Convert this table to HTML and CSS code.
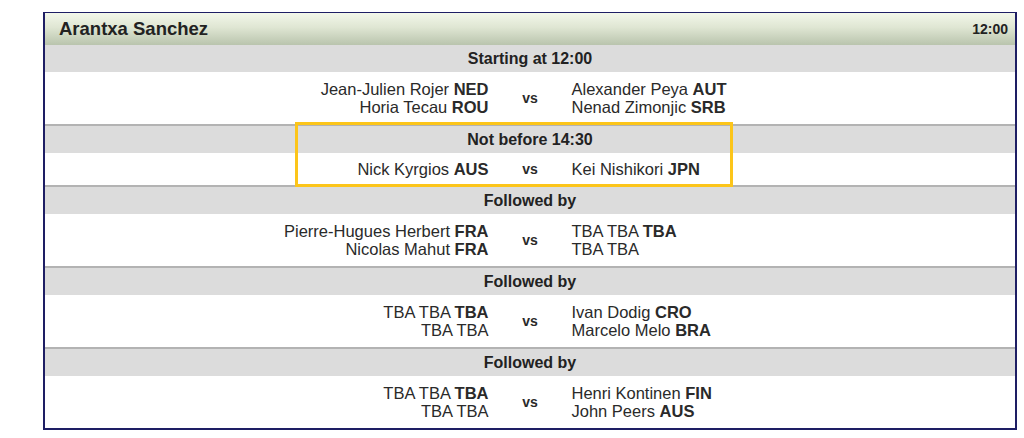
FILE: index.html
```html
<!DOCTYPE html>
<html>
<head>
<meta charset="utf-8">
<link rel="stylesheet" href="styles.css">
</head>
<body>
<div class="page">
  <div class="panel">
    <div class="court-head">
      <span class="court-name">Arantxa Sanchez</span>
      <span class="court-time">12:00</span>
    </div>

    <div class="sect first">Starting at 12:00</div>
    <div class="match">
      <div class="side left"><div>Jean-Julien Rojer <b>NED</b></div><div>Horia Tecau <b>ROU</b></div></div>
      <div class="vs">vs</div>
      <div class="side right"><div>Alexander Peya <b>AUT</b></div><div>Nenad Zimonjic <b>SRB</b></div></div>
    </div>

    <div class="sect">Not before 14:30</div>
    <div class="match single">
      <div class="side left"><div>Nick Kyrgios <b>AUS</b></div></div>
      <div class="vs">vs</div>
      <div class="side right"><div>Kei Nishikori <b>JPN</b></div></div>
    </div>

    <div class="sect">Followed by</div>
    <div class="match">
      <div class="side left"><div>Pierre-Hugues Herbert <b>FRA</b></div><div>Nicolas Mahut <b>FRA</b></div></div>
      <div class="vs">vs</div>
      <div class="side right"><div>TBA TBA <b>TBA</b></div><div>TBA TBA</div></div>
    </div>

    <div class="sect">Followed by</div>
    <div class="match">
      <div class="side left"><div>TBA TBA <b>TBA</b></div><div>TBA TBA</div></div>
      <div class="vs">vs</div>
      <div class="side right"><div>Ivan Dodig <b>CRO</b></div><div>Marcelo Melo <b>BRA</b></div></div>
    </div>

    <div class="sect">Followed by</div>
    <div class="match">
      <div class="side left"><div>TBA TBA <b>TBA</b></div><div>TBA TBA</div></div>
      <div class="vs">vs</div>
      <div class="side right"><div>Henri Kontinen <b>FIN</b></div><div>John Peers <b>AUS</b></div></div>
    </div>

    <div class="highlight"></div>
  </div>
</div>
</body>
</html>
```

FILE: styles.css
```css
html, body {
  margin: 0;
  padding: 0;
  background: #ffffff;
}
body {
  font-family: "Liberation Sans", Arial, sans-serif;
  color: #222222;
}
.page {
  padding: 12px 0 0 43px;
}
.panel {
  position: relative;
  width: 974px;
  box-sizing: border-box;
  border: 2px solid #1e1e64;
  border-top-width: 1px;
  box-shadow: 0 1px 0 #9a9aa6;
}
.court-head {
  height: 32px;
  display: flex;
  align-items: center;
  justify-content: space-between;
  padding: 0 7px 0 14px;
  background: linear-gradient(to bottom, #f3f7ea 0%, #dfe6d3 45%, #b9c4ad 100%);
}
.court-name {
  font-size: 18.5px;
  font-weight: bold;
  color: #222;
}
.court-time {
  font-size: 14px;
  font-weight: bold;
  color: #222;
}
.sect {
  height: 27px;
  line-height: 27px;
  background: #dcdcdc;
  border-top: 2px solid #b3b3b3;
  text-align: center;
  font-size: 16px;
  font-weight: bold;
  color: #222;
}
.sect.first {
  border-top: none;
  height: 27px;
  line-height: 27px;
}
.match {
  display: grid;
  grid-template-columns: 1fr 83px 1fr;
  align-items: center;
  padding: 8px 0;
  font-size: 16.5px;
  line-height: 18px;
  color: #2a2a2a;
}
.match.single {
  padding: 7px 0;
}
.side.left {
  text-align: right;
}
.side.right {
  text-align: left;
}
.vs {
  text-align: center;
  font-size: 14px;
  font-weight: bold;
}
.highlight {
  position: absolute;
  left: 250px;
  top: 109px;
  width: 438px;
  height: 65px;
  box-sizing: border-box;
  border: 3px solid #fcc51a;
  pointer-events: none;
}
```
